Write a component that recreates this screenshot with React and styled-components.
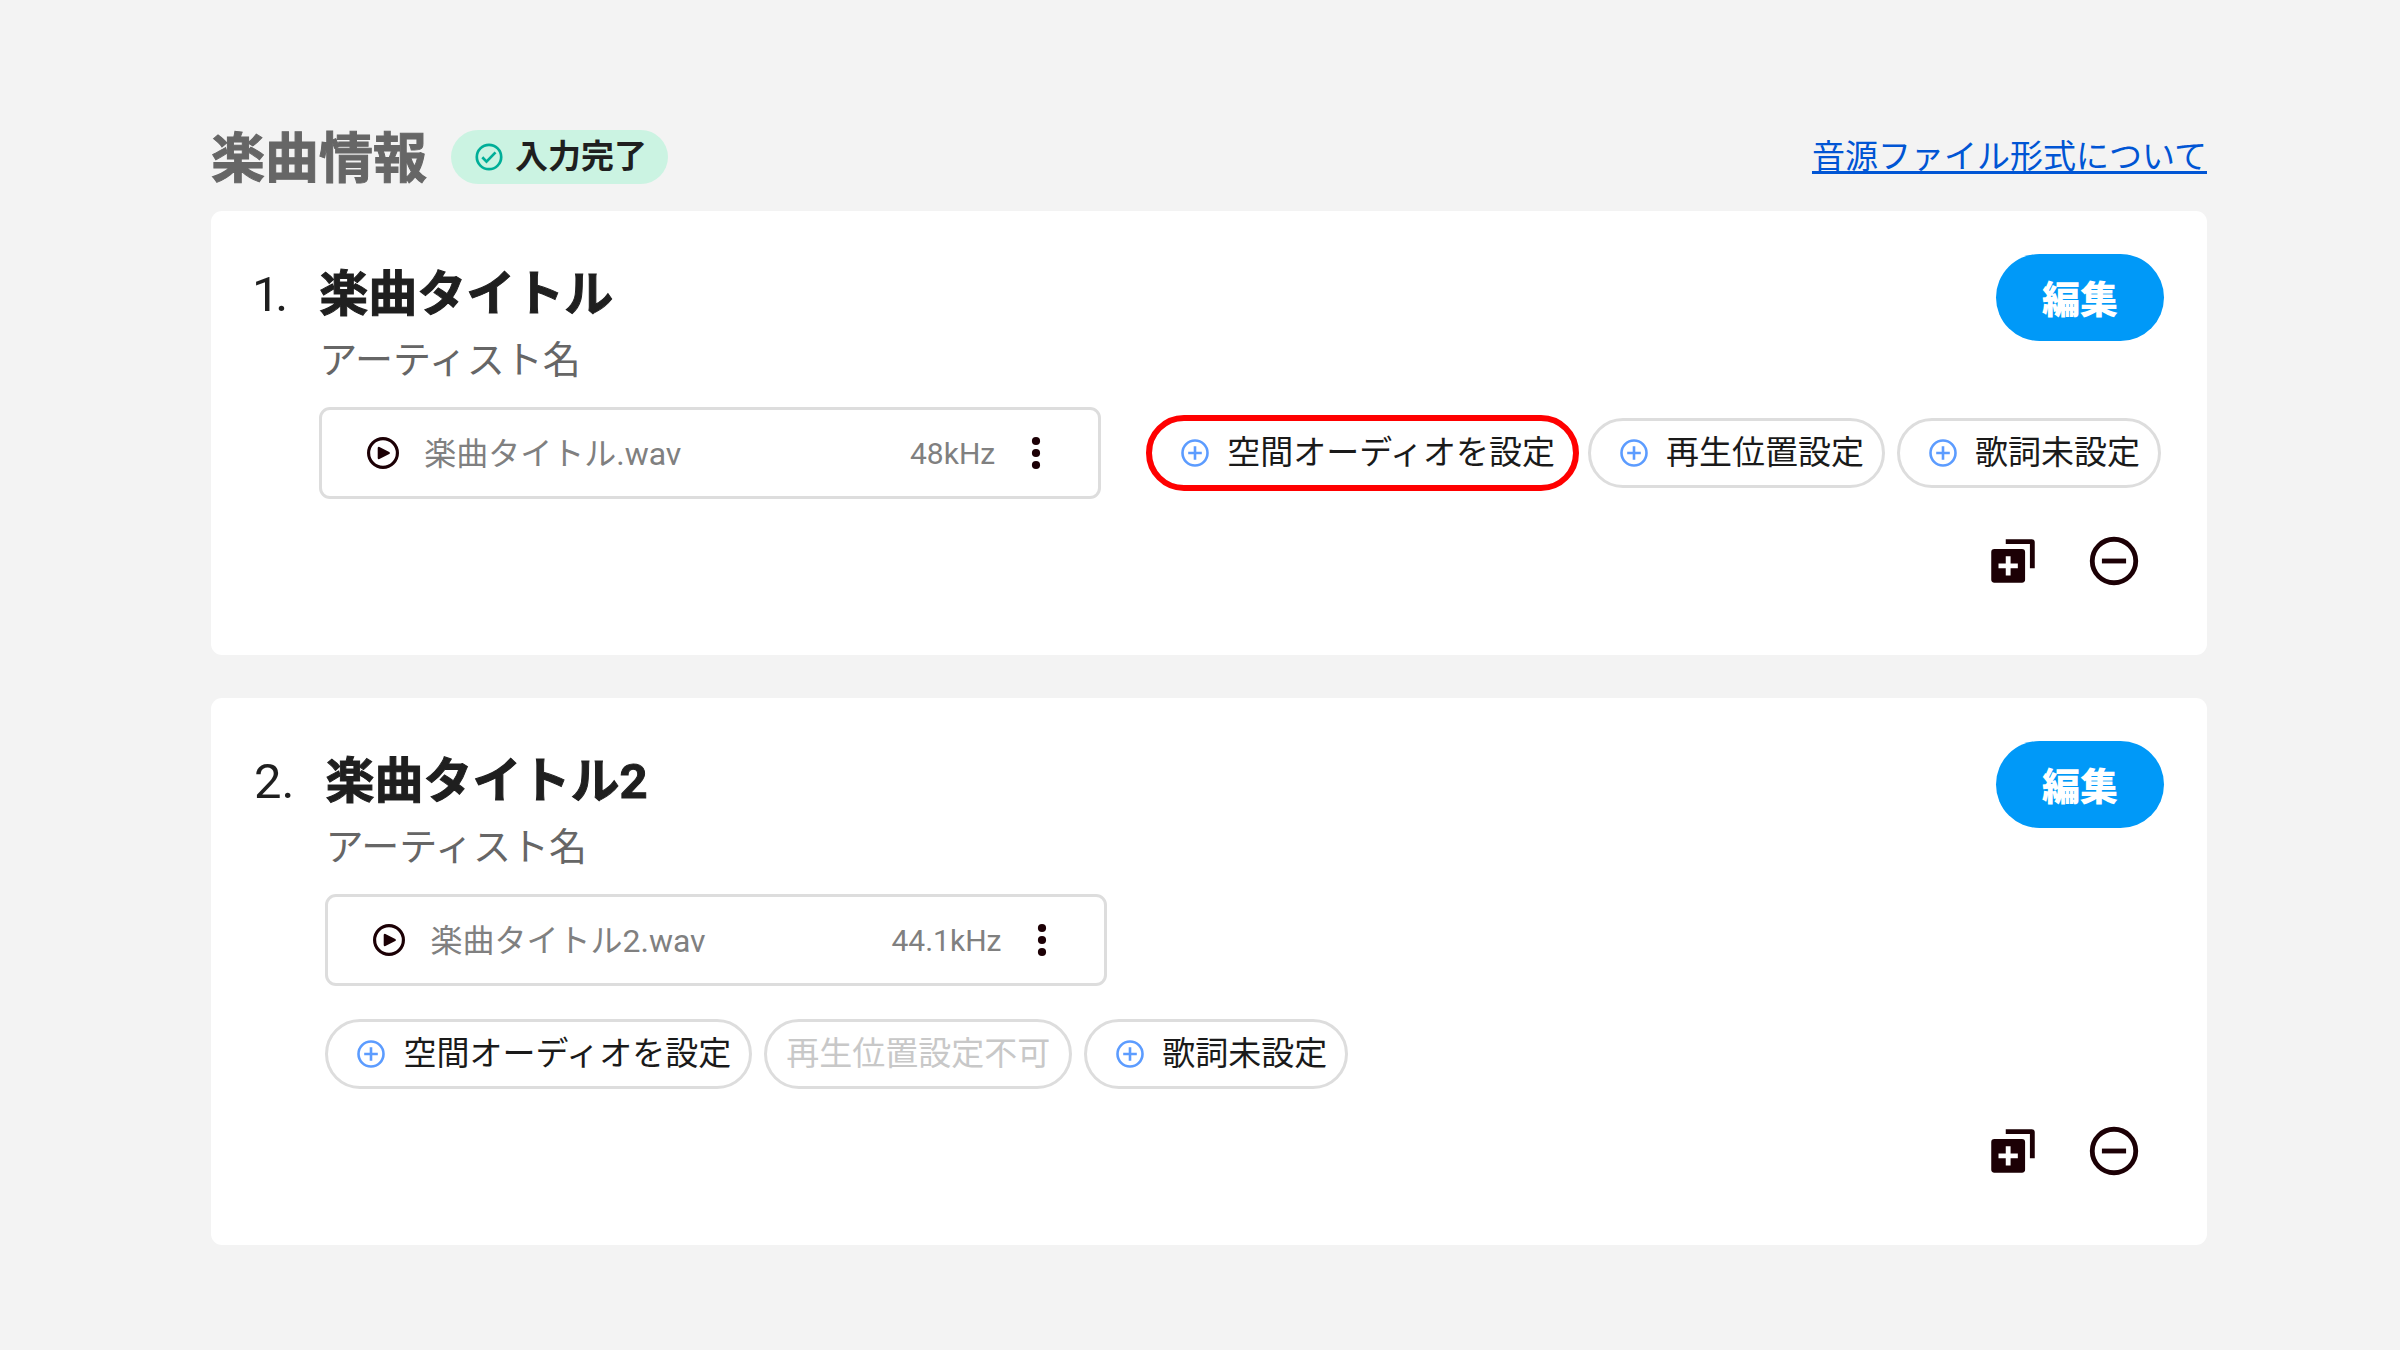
import React from 'react'
import { createGlobalStyle, styled } from "styled-components"

const GlobalStyle = createGlobalStyle`
    * {
        box-sizing: border-box;
    }

    body {
        margin: 0;
        background-color: #f3f3f3;
        color: #1f1f1f;
        font-family: Roboto, "Noto Sans CJK JP", sans-serif;
    }

    button {
        font-family: inherit;
        cursor: pointer;
    }

    svg {
        display: block;
        flex-shrink: 0;
    }
`

const Page = styled.main`
    padding: 116px 193px 106px 211px;
`

const Header = styled.header`
    display: flex;
    align-items: center;
    justify-content: space-between;
    margin-bottom: 13px;
`

const HeadingGroup = styled.div`
    display: flex;
    align-items: center;
    gap: 24px;
`

const Heading = styled.h1`
    margin: 0;
    padding-top: 6px;
    color: #666666;
    font-size: 54px;
    line-height: 76px;
    font-weight: 700;
    -webkit-text-stroke: 1px currentColor;
`

const Badge = styled.span`
    display: flex;
    align-items: center;
    gap: 12px;
    height: 54px;
    padding: 0 21px 0 24px;
    border-radius: 27px;
    background-color: #cbf3e2;
    font-size: 33px;
    line-height: 54px;
    font-weight: 700;
`

const HelpLink = styled.a`
    color: #0055d4;
    font-size: 33px;
    line-height: 48px;
    text-decoration: underline;
    text-decoration-thickness: 3px;
    text-decoration-skip-ink: none;
    text-underline-offset: 3px;
`

const TrackList = styled.div`
    display: flex;
    flex-direction: column;
    gap: 43px;
`

const Card = styled.article`
    display: flex;
    flex-direction: column;
    padding: 43px 43px 65px;
    border-radius: 11px;
    background-color: #ffffff;
`

const Track = styled.div`
    display: flex;
    gap: 31px;
`

const TrackNumber = styled.span`
    padding-top: 3px;
    font-size: 49px;
    line-height: 76px;
    font-variant-numeric: proportional-nums;
`

const TrackBody = styled.div`
    flex: 1;
    min-width: 0;
`

const TrackHead = styled.div`
    display: flex;
    align-items: flex-start;
    justify-content: space-between;
    margin-bottom: 19px;
`

const TrackNames = styled.div`
    padding-top: 3px;
`

const Title = styled.h2`
    margin: 0;
    font-size: 49px;
    line-height: 76px;
    font-weight: 700;
    -webkit-text-stroke: 1px currentColor;
`

const Artist = styled.p`
    margin: 0;
    color: #666666;
    font-size: 38px;
    line-height: 55px;
`

const EditButton = styled.button`
    height: 87px;
    padding: 0 46px 2px;
    border: none;
    border-radius: 44px;
    background-color: #0099f8;
    color: #ffffff;
    font-size: 38px;
    font-weight: 900;
`

const TrackSettings = styled.div`
    display: flex;
    flex-wrap: wrap;
    align-items: center;
    gap: 33px 48px;
`

const FileBox = styled.div`
    display: flex;
    align-items: center;
    width: 782px;
    height: 92px;
    padding: 0 43px 0 42px;
    border: 3px solid #dddddd;
    border-radius: 11px;
    color: #808080;
    line-height: 48px;
`

const FileName = styled.span`
    flex: 1;
    margin-left: 22px;
    padding-top: 2px;
    font-size: 32px;
`

const SampleRate = styled.span`
    margin-right: 22px;
    padding-top: 2px;
    font-size: 30px;
`

const IconButton = styled.button`
    display: flex;
    padding: 0;
    border: none;
    background: none;
    color: #1c0005;
`

const Chips = styled.div`
    display: flex;
    gap: 12px;
`

const Chip = styled.button`
    display: flex;
    align-items: center;
    gap: 18px;
    height: 70px;
    padding: ${({ disabled }) => disabled ? "0 19px" : "0 18px 0 29px"};
    border: 3px solid #dddddd;
    border-radius: 35px;
    background-color: #ffffff;
    color: ${({ disabled }) => disabled ? "#c8c8c8" : "#1a1a1a"};
    font-size: 33px;
    line-height: 48px;
    white-space: nowrap;
    outline: ${({ $highlighted }) => $highlighted ? "6px solid #ff0000" : "none"};
    outline-offset: -3px;
`

const Actions = styled.div`
    display: flex;
    justify-content: flex-end;
    gap: 43px;
    padding: 33px 21px 0 0;
`

const CheckIcon = () => (
    <svg width="28" height="28" viewBox="0 0 28 28" fill="none" stroke="#00ae98" strokeWidth="2.7" aria-hidden="true">
        <circle cx="14" cy="14" r="12.2" />
        <path d="M7.3 14.3l4.2 4.3 9-9.2" />
    </svg>
)

const PlusIcon = () => (
    <svg width="28" height="28" viewBox="0 0 28 28" fill="none" stroke="#5c9cff" strokeWidth="2.6" aria-hidden="true">
        <circle cx="14" cy="14" r="12.5" />
        <path d="M14 7.2v13.6M7.2 14h13.6" />
    </svg>
)

const PlayIcon = () => (
    <svg width="38" height="38" viewBox="0 0 24 24" aria-hidden="true">
        <circle cx="12" cy="12" r="9.1" fill="none" stroke="currentColor" strokeWidth="2" />
        <path d="M9.4 8.8v6.4l6.2-3.2z" fill="currentColor" stroke="currentColor" strokeWidth="1.5" strokeLinejoin="round" />
    </svg>
)

const MoreIcon = () => (
    <svg width="38" height="38" viewBox="0 0 38 38" fill="currentColor" aria-hidden="true">
        <circle cx="19" cy="7" r="4.1" />
        <circle cx="19" cy="19" r="4.1" />
        <circle cx="19" cy="31" r="4.1" />
    </svg>
)

const DuplicateIcon = () => (
    <svg width="58" height="58" viewBox="0 0 24 24" fill="currentColor" aria-hidden="true">
        <path d="M9 3h10.7A1.3 1.3 0 0 1 21 4.3V15h-2V5H9z" />
        <path fillRule="evenodd" d="M4.3 7h11.4A1.3 1.3 0 0 1 17 8.3v11.4a1.3 1.3 0 0 1-1.3 1.3H4.3A1.3 1.3 0 0 1 3 19.700V8.300A1.3 1.3 0 0 1 4.3 7zM9 10v3H6v2h3v3h2v-3h3v-2h-3v-3z" />
    </svg>
)

const RemoveIcon = () => (
    <svg width="58" height="58" viewBox="0 0 24 24" fill="none" stroke="currentColor" strokeWidth="2" aria-hidden="true">
        <circle cx="12" cy="12" r="9" />
        <path d="M7 12h10" />
    </svg>
)

const tracks = [
    {
        title: "楽曲タイトル",
        artist: "アーティスト名",
        file: "楽曲タイトル.wav",
        rate: "48kHz",
        settings: [
            { label: "空間オーディオを設定", highlighted: true },
            { label: "再生位置設定" },
            { label: "歌詞未設定" }
        ]
    },
    {
        title: "楽曲タイトル2",
        artist: "アーティスト名",
        file: "楽曲タイトル2.wav",
        rate: "44.1kHz",
        settings: [
            { label: "空間オーディオを設定" },
            { label: "再生位置設定不可", disabled: true },
            { label: "歌詞未設定" }
        ]
    }
]

const TrackCard = ({ number, track }) => (
    <Card>
        <Track>
            <TrackNumber>{number}.</TrackNumber>
            <TrackBody>
                <TrackHead>
                    <TrackNames>
                        <Title>{track.title}</Title>
                        <Artist>{track.artist}</Artist>
                    </TrackNames>
                    <EditButton type="button">編集</EditButton>
                </TrackHead>
                <TrackSettings>
                    <FileBox>
                        <IconButton type="button" aria-label="再生"><PlayIcon /></IconButton>
                        <FileName>{track.file}</FileName>
                        <SampleRate>{track.rate}</SampleRate>
                        <IconButton type="button" aria-label="メニュー"><MoreIcon /></IconButton>
                    </FileBox>
                    <Chips>
                        {track.settings.map(({ label, disabled, highlighted }) => (
                            <Chip key={label} type="button" disabled={disabled} $highlighted={highlighted}>
                                {!disabled && <PlusIcon />}
                                {label}
                            </Chip>
                        ))}
                    </Chips>
                </TrackSettings>
            </TrackBody>
        </Track>
        <Actions>
            <IconButton type="button" aria-label="複製"><DuplicateIcon /></IconButton>
            <IconButton type="button" aria-label="削除"><RemoveIcon /></IconButton>
        </Actions>
    </Card>
)

const App = () => (
    <>
        <GlobalStyle />
        <Page>
            <Header>
                <HeadingGroup>
                    <Heading>楽曲情報</Heading>
                    <Badge><CheckIcon />入力完了</Badge>
                </HeadingGroup>
                <HelpLink href="#format">音源ファイル形式について</HelpLink>
            </Header>
            <TrackList>
                {tracks.map((track, index) => (
                    <TrackCard key={track.title} number={index + 1} track={track} />
                ))}
            </TrackList>
        </Page>
    </>
)

export default App
